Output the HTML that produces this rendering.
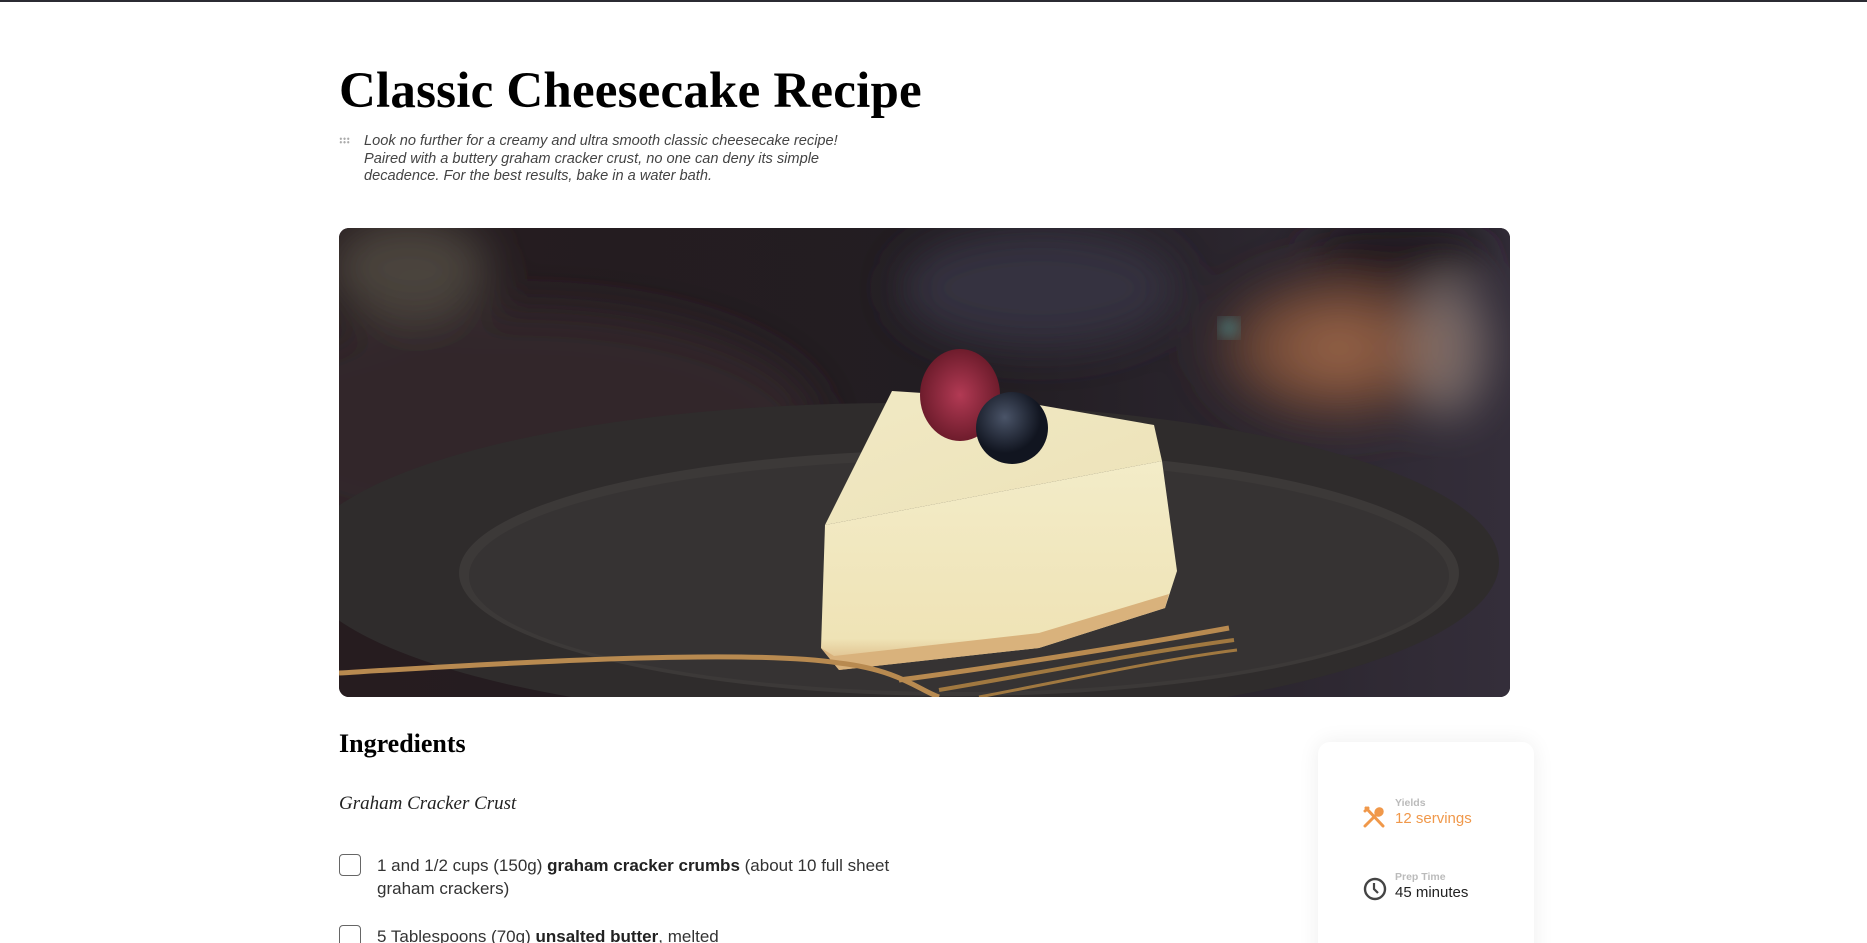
<!DOCTYPE html>
<html><head><meta charset="utf-8"><style>
html,body{margin:0;padding:0;background:#fff;width:1867px;height:943px;overflow:hidden}
body{border-top:2px solid #2b2b33;box-sizing:border-box;position:relative;font-family:"Liberation Sans",sans-serif}
.title{position:absolute;left:339px;top:57px;font-family:"Liberation Serif",serif;font-weight:bold;font-size:51px;letter-spacing:0.2px;color:#000;margin:0;line-height:64px}
.desc{position:absolute;left:364px;top:131px;width:505px;font-style:italic;font-size:14.6px;line-height:17.5px;color:#444}
.dots{position:absolute;left:339px;top:135px;width:11px;height:7px;background-image:radial-gradient(circle,#aaa 1px,transparent 1.3px);background-size:3.7px 3.5px}
.img{position:absolute;left:339px;top:226px;width:1171px;height:469px;border-radius:10px;overflow:hidden;background:#2c2427}
h2{position:absolute;left:339px;top:727px;margin:0;font-family:"Liberation Serif",serif;font-weight:bold;font-size:26px;color:#000}
.sub{position:absolute;left:339px;top:791px;font-family:"Liberation Serif",serif;font-style:italic;font-size:19px;color:#222}
.cb{position:absolute;left:339px;width:20px;height:20px;border:1.3px solid #666;border-radius:4px}
.ing{position:absolute;left:377px;width:560px;font-size:17px;line-height:23px;color:#333}
.ing b{color:#222}
.card{position:absolute;left:1318px;top:740px;width:216px;height:230px;background:#fff;border-radius:12px;box-shadow:0 0 22px rgba(0,0,0,0.07)}
.lab{position:absolute;font-size:10.5px;font-weight:bold;color:#bbb}
.val{position:absolute;font-size:15px}
</style></head><body>
<h1 class="title">Classic Cheesecake Recipe</h1>
<div class="dots"></div>
<div class="desc">Look no further for a creamy and ultra smooth classic cheesecake recipe! Paired with a buttery graham cracker crust, no one can deny its simple decadence. For the best results, bake in a water bath.</div>
<div class="img"><svg width="1171" height="469" viewBox="0 0 1171 469">
<defs>
<filter id="b8"><feGaussianBlur stdDeviation="8"/></filter>
<filter id="b20"><feGaussianBlur stdDeviation="22"/></filter>
<radialGradient id="cu" cx="0.5" cy="0.5" r="0.5"><stop offset="0" stop-color="#a06a4c"/><stop offset="0.6" stop-color="#6a4434"/><stop offset="1" stop-color="#3a2b2e" stop-opacity="0"/></radialGradient>
<linearGradient id="bg" x1="0" y1="0" x2="1" y2="0"><stop offset="0" stop-color="#261c1f"/><stop offset="0.55" stop-color="#221d22"/><stop offset="1" stop-color="#342e3a"/></linearGradient>
<linearGradient id="side" x1="0" y1="0" x2="0" y2="1"><stop offset="0" stop-color="#f3ecc8"/><stop offset="0.85" stop-color="#efe3b6"/><stop offset="1" stop-color="#d8b07a"/></linearGradient>
<linearGradient id="top" x1="0" y1="0" x2="1" y2="1"><stop offset="0" stop-color="#f1e9c4"/><stop offset="1" stop-color="#ece2b8"/></linearGradient>
<radialGradient id="rasp"><stop offset="0" stop-color="#b23a54"/><stop offset="1" stop-color="#6e1c2c"/></radialGradient>
<radialGradient id="blue" cx="0.4" cy="0.35"><stop offset="0" stop-color="#4a5468"/><stop offset="1" stop-color="#111520"/></radialGradient>
</defs>
<rect width="1171" height="469" fill="url(#bg)"/>
<g filter="url(#b20)">
<ellipse cx="180" cy="200" rx="300" ry="120" fill="#30262a"/>
<ellipse cx="700" cy="60" rx="140" ry="60" fill="#353040"/>
<ellipse cx="1000" cy="120" rx="150" ry="90" fill="url(#cu)"/>
<ellipse cx="1110" cy="120" rx="40" ry="70" fill="#a89890" opacity="0.5"/>
<ellipse cx="1060" cy="20" rx="90" ry="30" fill="#1a161a"/>
<ellipse cx="70" cy="40" rx="80" ry="50" fill="#5a5448" opacity="0.7"/>
</g>
<circle cx="890" cy="100" r="10" fill="#4a7a78" filter="url(#b8)"/>
<ellipse cx="560" cy="335" rx="600" ry="160" fill="#2f2c2c"/>
<ellipse cx="620" cy="345" rx="500" ry="123" fill="#3c3938"/>
<ellipse cx="620" cy="348" rx="490" ry="116" fill="#363333"/>
<polygon points="486,297 823,233 838,343 826,380 700,420 500,442 482,420" fill="url(#side)"/>
<polygon points="486,297 553,163 660,170 815,197 823,233" fill="url(#top)"/>
<polygon points="482,420 500,442 700,420 826,380 830,366 700,405 495,428" fill="#d9b27c"/>
<ellipse cx="621" cy="167" rx="40" ry="46" fill="url(#rasp)"/>
<circle cx="673" cy="200" r="36" fill="url(#blue)"/>
<path d="M0,445 C150,436 400,420 500,435 C560,442 580,462 600,469" stroke="#b88a50" stroke-width="5" fill="none"/>
<path d="M560,452 C650,440 780,420 890,400" stroke="#b88a50" stroke-width="5" fill="none"/>
<path d="M600,462 C700,445 800,425 895,412" stroke="#a07840" stroke-width="4" fill="none"/>
<path d="M640,469 C740,450 820,432 898,422" stroke="#a07840" stroke-width="3" fill="none"/>
</svg></div>
<h2>Ingredients</h2>
<div class="sub">Graham Cracker Crust</div>
<div class="cb" style="top:852px"></div>
<div class="ing" style="top:852px">1 and 1/2 cups (150g) <b>graham cracker crumbs</b> (about 10 full sheet graham crackers)</div>
<div class="cb" style="top:923px"></div>
<div class="ing" style="top:923px">5 Tablespoons (70g) <b>unsalted butter</b>, melted</div>
<div class="card">
<svg style="position:absolute;left:45px;top:64px" width="22" height="22" viewBox="0 0 22 22"><path d="M3,2 L20,20 M2,5 L5,2" stroke="#f0984a" stroke-width="3" stroke-linecap="round"/><ellipse cx="16" cy="6" rx="4.5" ry="5" fill="#f0984a" transform="rotate(40 16 6)"/><path d="M13,9 L2,20" stroke="#f0984a" stroke-width="3" stroke-linecap="round"/></svg>
<div class="lab" style="left:77px;top:55px">Yields</div>
<div class="val" style="left:77px;top:68px;color:#f0984a">12 servings</div>
<svg style="position:absolute;left:45px;top:135px" width="24" height="24" viewBox="0 0 24 24"><circle cx="12" cy="12" r="10" stroke="#444" stroke-width="2.4" fill="none"/><path d="M11,6 V12 L15,16" stroke="#444" stroke-width="2.2" fill="none"/></svg>
<div class="lab" style="left:77px;top:129px">Prep Time</div>
<div class="val" style="left:77px;top:142px;color:#222">45 minutes</div>
</div>
</body></html>
